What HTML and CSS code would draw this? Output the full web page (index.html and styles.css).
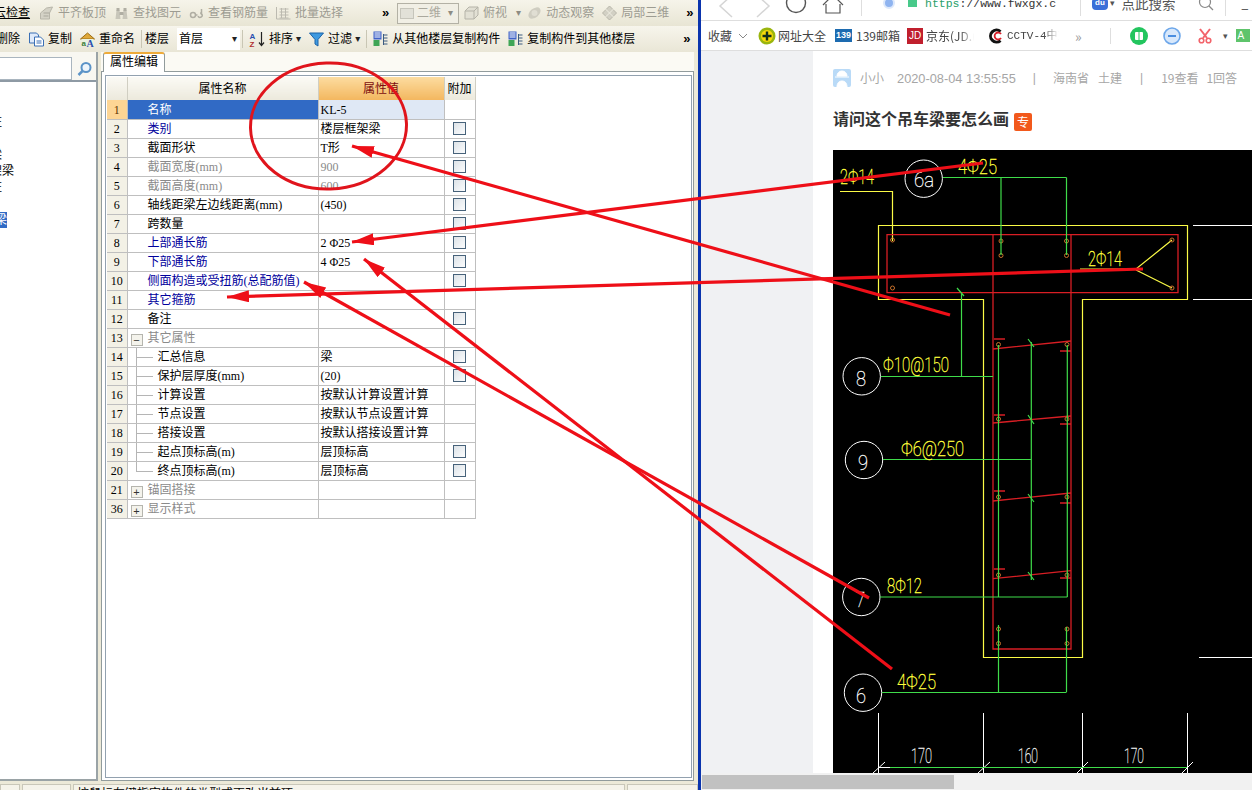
FILE: index.html
```html
<!DOCTYPE html>
<html lang="zh-CN">
<head>
<meta charset="utf-8">
<title>属性编辑</title>
<link rel="stylesheet" href="styles.css">
</head>
<body>
<div class="app">
  <div class="toolbar tb1">
    <span class="tool t-clip"><span class="ul">云检查</span></span>
    <span class="tool off"><svg class="ico" viewBox="0 0 16 16"><path d="M2 14V8l6-5 6-1-3 6v6z" fill="#d4d2c6" stroke="#b8b6aa"/><path d="M5 11h5M5 8h6" stroke="#a9a79c"/></svg>平齐板顶</span>
    <span class="tool off"><svg class="ico" viewBox="0 0 16 16"><path d="M2 14l1-9h3l1 9zM9 14l1-9h3l1 9z" fill="#c8c6ba"/><path d="M3 3h3v3H3zM10 3h3v3h-3zM6 7h4v3H6z" fill="#b0aea3"/></svg>查找图元</span>
    <span class="tool off"><svg class="ico" viewBox="0 0 16 16"><circle cx="4.500" cy="10" r="2.500" fill="none" stroke="#b0aea3" stroke-width="1.500"/><path d="M7 10h2M9.500 11a2.200 2.200 0 1 0 2-3M13 10V4" fill="none" stroke="#b0aea3" stroke-width="1.500"/></svg>查看钢筋量</span>
    <span class="tool off"><svg class="ico" viewBox="0 0 16 16"><path d="M1 2v12h14M4 4h9M4 7h9M4 10h9M4 13h9M6 3v10M10 3v10" fill="none" stroke="#bcbab0"/></svg>批量选择</span>
    <span class="more m-a">»</span>
    <span class="combo-off"><span class="swatch"></span><span class="combo-txt">二维</span><span class="caret-off">▾</span></span>
    <span class="tool off m-s"><svg class="ico" viewBox="0 0 17 16"><path d="M2 6l4-4h9v8l-4 4H2z" fill="#e2e0d4" stroke="#b5b3a8"/><path d="M2 6h9v8M11 6l4-4" fill="none" stroke="#b5b3a8"/></svg>俯视<span class="caret-off m-c">▾</span></span>
    <span class="tool off"><svg class="ico" viewBox="0 0 16 16"><ellipse cx="8" cy="8" rx="7" ry="4.500" fill="#cfcdc1" transform="rotate(-40 8 8)"/><circle cx="8" cy="8" r="3" fill="#e0ded3"/></svg>动态观察</span>
    <span class="tool off"><svg class="ico" viewBox="0 0 16 16"><path d="M8 1l7 7-7 7-7-7z" fill="#d2d0c4" stroke="#b8b6aa"/><path d="M4 4l8 8M12 4l-8 8" stroke="#f1efe4"/></svg>局部三维</span>
    <span class="more m-end">»</span>
  </div>
  <div class="toolbar tb2">
    <span class="tool t-del">删除</span>
    <span class="tool"><svg class="ico" viewBox="0 0 16 16"><path d="M1 2h7l2 2v8H1z" fill="#dfeafa" stroke="#3a6fb5"/><path d="M6 6h6l3 3v6H6z" fill="#fff" stroke="#3a6fb5"/><path d="M8 10h5M8 12h5" stroke="#3a6fb5"/></svg>复制</span>
    <span class="tool"><svg class="ico" viewBox="0 0 16 16"><path d="M1 8l7-6 7 6z" fill="#e0a93a" stroke="#9b6d14"/><rect x="2" y="8" width="12" height="7" fill="#eaf2e0"/><text class="ico-t" x="2" y="15">a</text><text class="ico-a" x="7" y="15.500">A</text></svg>重命名</span>
    <span class="sep"></span>
    <span class="plain">楼层</span>
    <span class="combo"><span>首层</span><span class="caret">▾</span></span>
    <span class="sep"></span>
    <span class="tool m-t"><svg class="ico" viewBox="0 0 16 16"><text class="az-a" x="0" y="7.500">A</text><text class="az-z" x="0" y="15.500">Z</text><path d="M12 1v13M9.500 11.500l2.500 3 2.500-3" fill="none" stroke="#222" stroke-width="1.200"/></svg>排序<span class="caret">▾</span></span>
    <span class="tool"><svg class="ico" viewBox="0 0 16 16"><path d="M1 2h14l-5.500 6.500V15l-3-2V8.500z" fill="#3f9ae0" stroke="#1b62a8"/></svg>过滤<span class="caret">▾</span></span>
    <span class="sep"></span>
    <span class="tool m-t2"><svg class="ico" viewBox="0 0 16 16"><rect x="1" y="0.500" width="8" height="8" fill="#3f62c8"/><path d="M2 2h6M2 4h6M2 6h6" stroke="#fff"/><rect x="1" y="9" width="6" height="6" fill="#3fa556"/><path d="M11 4h4M11 7h4M11 10h4M11 13h4M11 3v11" stroke="#3a5a80"/></svg>从其他楼层复制构件</span>
    <span class="tool"><svg class="ico" viewBox="0 0 16 16"><rect x="1" y="0.500" width="8" height="8" fill="#3f62c8"/><path d="M2 2h6M2 4h6M2 6h6" stroke="#fff"/><rect x="1" y="9" width="6" height="6" fill="#3fa556"/><path d="M11 4h4M11 7h4M11 10h4M11 13h4M11 3v11" stroke="#3a5a80"/></svg>复制构件到其他楼层</span>
    <span class="more m-end2">»</span>
  </div>
  <div class="main">
    <aside class="left">
      <div class="search"><span class="search-box"></span><span class="search-btn"><svg class="ico" viewBox="0 0 16 16"><circle cx="9.500" cy="6.500" r="4.500" fill="#eef5fb" stroke="#5b93c7" stroke-width="2"/><path d="M6 10l-4 4" stroke="#5b93c7" stroke-width="2.500"/></svg></span></div>
      <div class="tree">
        <div class="leaf lw2"><span>框架柱</span></div>
        <div class="leaf lw2"></div>
        <div class="leaf lw2"><span>框架梁</span></div>
        <div class="leaf lw14"><span>框架梁</span></div>
        <div class="leaf lw2"><span>框架柱</span></div>
        <div class="leaf lw2"></div>
        <div class="leaf lw7 sel"><span>框架梁</span></div>
      </div>
    </aside>
    <section class="right">
      <div class="tabs"><span class="tab">属性编辑</span></div>
      <div class="panel">
        <div class="gridbox">
          <table class="grid">
            <colgroup><col class="c-n"><col class="c-k"><col class="c-v"><col class="c-x"></colgroup>
            <thead><tr><th class="rn"></th><th>属性名称</th><th class="hv">属性值</th><th>附加</th></tr></thead>
            <tbody>
              <tr class="cur"><td class="rn">1</td><td class="k sel-k">名称</td><td class="v sel-v">KL-5</td><td></td></tr>
              <tr><td class="rn">2</td><td class="k blue">类别</td><td class="v">楼层框架梁</td><td class="x"><i class="cb"></i></td></tr>
              <tr><td class="rn">3</td><td class="k">截面形状</td><td class="v">T形</td><td class="x"><i class="cb"></i></td></tr>
              <tr><td class="rn">4</td><td class="k grey">截面宽度(mm)</td><td class="v grey">900</td><td class="x"><i class="cb"></i></td></tr>
              <tr><td class="rn">5</td><td class="k grey">截面高度(mm)</td><td class="v grey">600</td><td class="x"><i class="cb"></i></td></tr>
              <tr><td class="rn">6</td><td class="k">轴线距梁左边线距离(mm)</td><td class="v">(450)</td><td class="x"><i class="cb"></i></td></tr>
              <tr><td class="rn">7</td><td class="k">跨数量</td><td class="v"></td><td class="x"><i class="cb"></i></td></tr>
              <tr><td class="rn">8</td><td class="k blue">上部通长筋</td><td class="v">2 Φ25</td><td class="x"><i class="cb"></i></td></tr>
              <tr><td class="rn">9</td><td class="k blue">下部通长筋</td><td class="v">4 Φ25</td><td class="x"><i class="cb"></i></td></tr>
              <tr><td class="rn">10</td><td class="k blue">侧面构造或受扭筋(总配筋值)</td><td class="v"></td><td class="x"><i class="cb"></i></td></tr>
              <tr><td class="rn">11</td><td class="k blue">其它箍筋</td><td class="v"></td><td></td></tr>
              <tr><td class="rn">12</td><td class="k">备注</td><td class="v"></td><td class="x"><i class="cb"></i></td></tr>
              <tr><td class="rn">13</td><td class="k grey g"><i class="exp">−</i>其它属性</td><td class="v"></td><td></td></tr>
              <tr><td class="rn">14</td><td class="k ch">汇总信息</td><td class="v">梁</td><td class="x"><i class="cb"></i></td></tr>
              <tr><td class="rn">15</td><td class="k ch">保护层厚度(mm)</td><td class="v">(20)</td><td class="x"><i class="cb"></i></td></tr>
              <tr><td class="rn">16</td><td class="k ch">计算设置</td><td class="v">按默认计算设置计算</td><td></td></tr>
              <tr><td class="rn">17</td><td class="k ch">节点设置</td><td class="v">按默认节点设置计算</td><td></td></tr>
              <tr><td class="rn">18</td><td class="k ch">搭接设置</td><td class="v">按默认搭接设置计算</td><td></td></tr>
              <tr><td class="rn">19</td><td class="k ch">起点顶标高(m)</td><td class="v">层顶标高</td><td class="x"><i class="cb"></i></td></tr>
              <tr><td class="rn">20</td><td class="k ch last">终点顶标高(m)</td><td class="v">层顶标高</td><td class="x"><i class="cb"></i></td></tr>
              <tr><td class="rn">21</td><td class="k grey g"><i class="exp">+</i>锚固搭接</td><td class="v"></td><td></td></tr>
              <tr><td class="rn">36</td><td class="k grey g"><i class="exp">+</i>显示样式</td><td class="v"></td><td></td></tr>
            </tbody>
          </table>
        </div>
      </div>
    </section>
  </div>
  <div class="status"><span class="s1"></span><span class="s2"></span><span class="s3">按鼠标左键指定构件的类型或更改当前项</span><span class="s4"></span></div>
</div>
<div class="divider"></div>
<div class="browser">
  <div class="addr">
    <div class="addr-in">
      <svg class="nav" viewBox="0 0 150 34"><path d="M31 9L19 20l12 11M56 9l12 11-12 11" fill="none" stroke="#d5d5d5" stroke-width="1.500"/><circle cx="95" cy="17" r="9.500" fill="none" stroke="#555" stroke-width="1.400"/><path d="M122 19l10-10 10 10M125 18v9h14v-9" fill="none" stroke="#555" stroke-width="1.200"/></svg>
      <span class="vr v1"></span>
      <span class="dot"></span>
      <span class="lock"></span>
      <span class="url"><span class="https">https</span>://www.fwxgx.c</span>
      <span class="vr v2"></span>
      <span class="du">du</span><span class="ddn">▾</span>
      <span class="hint">点此搜索</span>
      <svg class="mag" viewBox="0 0 16 16"><circle cx="7" cy="7" r="5.500" fill="none" stroke="#888" stroke-width="1.200"/><path d="M11 11l4 4" stroke="#888" stroke-width="1.200"/></svg>
      <span class="vr v3"></span>
      <span class="min">_</span>
    </div>
  </div>
  <div class="marks">
    <span class="mk m0">收藏</span>
    <svg class="chev" viewBox="0 0 10 10"><path d="M1 3l4 4 4-4" fill="none" stroke="#888"/></svg>
    <svg class="mi m1" viewBox="0 0 18 18"><circle cx="9" cy="9" r="8.500" fill="#9ab50e"/><circle cx="9" cy="9" r="6" fill="#f5d90a"/><path d="M9 4.500v9M4.500 9h9" stroke="#14301a" stroke-width="2.400"/></svg>
    <span class="mk m2">网址大全</span>
    <span class="b139">139</span>
    <span class="mk m3">139邮箱</span>
    <span class="jd">JD</span>
    <span class="mk m4 fade">京东(JD.(</span>
    <svg class="mi m5" viewBox="0 0 16 16"><path d="M12.500 3.500a6 6 0 1 0 0 9" fill="none" stroke="#111" stroke-width="3"/><path d="M13 6a3.500 3.500 0 1 0 0 4" fill="none" stroke="#d8202a" stroke-width="1.800"/></svg>
    <span class="mk m6 fade">CCTV-4中文</span>
    <span class="more2">»</span>
    <span class="vr2"></span>
    <svg class="mi m7" viewBox="0 0 18 18"><circle cx="9" cy="9" r="9" fill="#22c55e"/><rect x="5" y="5" width="8" height="8" rx="1" fill="#fff"/><path d="M9 5v8" stroke="#22c55e"/></svg>
    <svg class="mi m8" viewBox="0 0 18 18"><circle cx="9" cy="9" r="8" fill="#d8e8fb" stroke="#6da7ea" stroke-width="1.600"/><path d="M5 9h8" stroke="#4a8de0" stroke-width="2"/></svg>
    <svg class="mi m9" viewBox="0 0 16 16"><path d="M3 1l7 9M13 1L6 10" stroke="#f2636a" stroke-width="2"/><circle cx="4.500" cy="12.500" r="2.300" fill="none" stroke="#f2636a" stroke-width="1.600"/><circle cx="11.500" cy="12.500" r="2.300" fill="none" stroke="#f2636a" stroke-width="1.600"/></svg>
    <span class="ddn d2">▾</span>
    <span class="greenbox">A</span>
  </div>
  <div class="page">
    <div class="gutter"></div>
    <div class="article">
      <div class="meta">
        <svg class="avatar" viewBox="0 0 18 18"><rect width="18" height="18" rx="2" fill="#b9daf7"/><path d="M4 7a5 5 0 0 1 10 0zM2 8h14M4 18c0-4 2-6 5-6s5 2 5 6" fill="#fff" stroke="#fff"/></svg>
        <span class="author">小小</span>
        <span class="date">2020-08-04 13:55:55</span>
        <span class="bar b-a">|</span>
        <span class="mt-a">海南省</span>
        <span class="mt-b">土建</span>
        <span class="bar b-b">|</span>
        <span class="mt-c">19查看</span>
        <span class="mt-d">1回答</span>
      </div>
      <div class="title"><h1>请问这个吊车梁要怎么画</h1><span class="badge">专</span></div>
      <div class="drawing">
        <svg class="cad" viewBox="833 150 419 623" preserveAspectRatio="none">
          <g class="c-yel">
            <path d="M878.500 225.500H1187.500V299.500H1082.500V657.500H983.500V299.500H878.500Z"/>
            <path d="M892.500 241V191.500H840M1080 269H1136L1172 240M1136 270L1172 288"/>
          </g>
          <g class="c-wht">
            <circle cx="923.700" cy="178.700" r="18.700"/><circle cx="861.700" cy="376.300" r="18.700"/><circle cx="864" cy="460" r="18.700"/><circle cx="861.300" cy="597" r="18.700"/><circle cx="863" cy="692.700" r="18.700"/>
            <path d="M1193 225.500H1252M1193 299.500H1252M1199 657.500H1252M878.500 713V773M983.500 713V773M1082.500 713V773M1187.500 713V773M878 767.500H890M983 767.500H996M873 773L885 762M978 773L990 762M1077 773L1088 762M1182 773L1193 762"/>
          </g>
          <g class="c-red">
            <path d="M887 234.700H1178V292.700H887ZM993 234.700V649H1071V234.700"/>
            <path d="M993 349L1071 341M993 423L1071 416M993 501L1071 493M993 578.700L1071 570.700M994 339H1005M1060 351H1071M994 415H1005M1060 424H1071M994 491H1005M1060 503H1071M994 569H1005M1060 578H1071"/>
          </g>
          <g class="c-dot">
            <circle cx="892.500" cy="240" r="2"/><circle cx="892.500" cy="288" r="2"/><circle cx="1001" cy="241" r="2"/><circle cx="1001" cy="255.500" r="2"/><circle cx="1066.500" cy="241" r="2"/><circle cx="1066.500" cy="255.500" r="2"/><circle cx="1172" cy="240" r="2"/><circle cx="1172" cy="288" r="2"/>
            <circle cx="998.500" cy="344.500" r="2"/><circle cx="1067" cy="344.500" r="2"/><circle cx="998.500" cy="419" r="2"/><circle cx="1067" cy="419" r="2"/><circle cx="998.500" cy="497" r="2"/><circle cx="1067" cy="497" r="2"/><circle cx="998.500" cy="575" r="2"/><circle cx="1067" cy="575" r="2"/><circle cx="998.500" cy="629" r="2"/><circle cx="1067" cy="629" r="2"/><circle cx="998.500" cy="643.500" r="2"/><circle cx="1067" cy="643.500" r="2"/>
          </g>
          <g class="c-grn">
            <path d="M943 177.500H1066.500M1001 177.500V255M1066.500 177.500V255M881 376.500H993M961.500 376.500V293M957 288L964 296M883 459.500H1031M1031.300 342V580M998.500 345V597M1067.300 345V597M880 597H1067.300M998.500 625V692M1066.500 627V692M882 692.500H1066.500M890 767.500H1187"/>
            <path d="M1028 339L1034 347M1028 415L1034 424M1028 494L1034 502M1028 572L1034 580"/>
          </g>
          <g class="t-wht">
            <text x="914" y="187" textLength="20" lengthAdjust="spacingAndGlyphs">6a</text>
            <text x="856" y="386" textLength="10" lengthAdjust="spacingAndGlyphs">8</text>
            <text x="858" y="470" textLength="10" lengthAdjust="spacingAndGlyphs">9</text>
            <text x="856" y="607" textLength="9" lengthAdjust="spacingAndGlyphs">7</text>
            <text x="856" y="703" textLength="10" lengthAdjust="spacingAndGlyphs">6</text>
            <text x="911" y="763" textLength="21" lengthAdjust="spacingAndGlyphs">170</text>
            <text x="1018" y="763" textLength="20" lengthAdjust="spacingAndGlyphs">160</text>
            <text x="1124" y="763" textLength="20" lengthAdjust="spacingAndGlyphs">170</text>
          </g>
          <g class="t-yel">
            <text x="958" y="174" textLength="39" lengthAdjust="spacingAndGlyphs">4Φ25</text>
            <text x="840" y="184" textLength="34" lengthAdjust="spacingAndGlyphs">2Φ14</text>
            <text x="1088" y="266" textLength="34" lengthAdjust="spacingAndGlyphs">2Φ14</text>
            <text x="883" y="372" textLength="66" lengthAdjust="spacingAndGlyphs">Φ10@150</text>
            <text x="901" y="456" textLength="63" lengthAdjust="spacingAndGlyphs">Φ6@250</text>
            <text x="887" y="593" textLength="35" lengthAdjust="spacingAndGlyphs">8Φ12</text>
            <text x="897" y="689" textLength="39" lengthAdjust="spacingAndGlyphs">4Φ25</text>
          </g>
        </svg>
      </div>
    </div>
  </div>
  <div class="hscroll"><span class="thumb"></span></div>
</div>
<svg class="marks-over" viewBox="0 0 1252 790">
  <defs>
    <marker id="tip" markerUnits="userSpaceOnUse" markerWidth="24" markerHeight="14" refX="22" refY="6" orient="auto-start-reverse"><path d="M0 0L22 6L0 12Z" fill="#ee0f18"/></marker>
  </defs>
  <ellipse class="ring" cx="328.500" cy="126" rx="78" ry="63" transform="rotate(-2 328.500 126)"/>
  <path class="arrow" d="M950 315L352 146" marker-end="url(#tip)"/>
  <path class="arrow" d="M983 163L352 242" marker-end="url(#tip)"/>
  <path class="arrow" d="M1143 269L227 297" marker-end="url(#tip)"/>
  <path class="arrow" d="M892 669L364 259" marker-end="url(#tip)"/>
  <path class="arrow" d="M869 598L304 282" marker-end="url(#tip)"/>
</svg>
</body>
</html>
```
FILE: styles.css
```css
* { box-sizing: border-box; }
html, body { margin: 0; padding: 0; }
body {
  position: relative;
  display: flex;
  width: 1252px;
  height: 790px;
  overflow: hidden;
  background: #fff;
  color: #000;
  font: 12px/14px "Liberation Serif", "Noto Sans CJK SC", serif;
}
.app { display: flex; flex-direction: column; flex: 0 0 698px; width: 698px; height: 790px; background: #ece9d8; overflow: hidden; }

.toolbar { display: flex; align-items: center; flex: 0 0 26px; height: 26px; white-space: nowrap; }
.tb1 { background: linear-gradient(#f6f4ea, #e8e5d4); padding-left: 0; }
.tb2 { background: linear-gradient(#f7f5ec, #e9e6d6); }
.tool { display: inline-flex; align-items: center; gap: 3px; margin-right: 7px; flex: none; }
.ico { display: block; width: 17px; height: 16px; flex: none; }
.off { color: #9d9c92; }
.t-clip { margin-left: -6px; margin-right: 8px; }
.ul { text-decoration: underline; }
.more { flex: none; font: bold 13px/14px "Liberation Sans", sans-serif; width: 10px; }
.m-a { margin-left: 32px; margin-right: 5px; }
.m-end { margin-left: 10px; }
.m-end2 { margin-left: 41px; }
.combo-off { display: inline-flex; align-items: center; gap: 3px; flex: none; width: 62px; height: 21px; border: 1px solid #b3b1a5; padding: 0 2px; color: #aaa89d; margin-right: 4px; background: #f1efe5; }
.swatch { width: 14px; height: 11px; border: 1px solid #c6c5bb; background: #e2e1d8; }
.caret-off { margin-left: 4px; font-size: 10px; color: #8d8c83; font-family: "DejaVu Sans", sans-serif; }
.m-s { margin-right: 5px; }
.m-c { margin-left: 6px; }
.t-del { margin-left: -4px; margin-right: 8px; }
.sep { flex: none; width: 1px; height: 18px; background: #c9c6b4; margin: 0 3px 0 -1px; }
.plain { flex: none; margin-right: 8px; }
.combo { display: inline-flex; justify-content: space-between; align-items: center; flex: none; width: 63px; height: 22px; background: #fff; padding: 0 3px 0 2px; margin-right: 3px; }
.caret { font-size: 10px; font-family: "DejaVu Sans", sans-serif; color: #222; }
.m-t { margin-left: 3px; }
.m-t2 { margin-left: 2px; }
.ico-t { font: bold 8px "Liberation Sans", sans-serif; fill: #3a7d3a; }
.ico-a { font: bold 10px "Liberation Serif", serif; fill: #2a4fb0; }
.az-a { font: bold 8px "Liberation Sans", sans-serif; fill: #2a4fb0; }
.az-z { font: bold 8px "Liberation Sans", sans-serif; fill: #b03030; }

.main { display: flex; flex: 1 1 auto; min-height: 0; }
.left { flex: 0 0 98px; width: 98px; height: 729px; background: #fff; border-right: 2px solid #9aa3a6; border-bottom: 2px solid #9aa3a6; display: flex; flex-direction: column; }
.search { display: flex; flex: 0 0 30px; height: 30px; background: #f8f7f1; padding-top: 5px; border-bottom: 2px solid #8e9aa4; }
.search-box { width: 72px; height: 23px; background: #fff; border: 1px solid #a9b5bf; border-left: 0; }
.search-btn { display: flex; align-items: center; justify-content: center; width: 24px; height: 23px; }
.tree { padding-top: 32px; display: flex; flex-direction: column; }
.leaf { display: flex; justify-content: flex-end; height: 16.330px; overflow: hidden; font-size: 12px; line-height: 16px; white-space: nowrap; }
.leaf span { flex: none; }
.lw2 { width: 2px; }
.lw14 { width: 14px; }
.lw7 { width: 7px; height: 16px; }
.sel { background: #316ac5; color: #fff; }

.right { display: flex; flex-direction: column; flex: 0 0 593px; width: 593px; margin-left: 3px; height: 729px; }
.tabs { flex: 0 0 19px; height: 19px; padding-left: 2px; background: #fbfaf4; }
.tab { display: block; width: 62px; height: 20px; background: #fff; border: 1px solid #919b9c; border-top: 2px solid #eeab3a; border-bottom: 0; border-radius: 3px 3px 0 0; text-align: center; line-height: 17px; position: relative; z-index: 1; }
.panel { flex: 1 1 auto; background: #fff; border: 1px solid #919b9c; padding: 3px 1px 2px 3px; display: flex; }
.gridbox { flex: 1 1 auto; border: 1px solid #92a1af; padding: 1px; background: #fff; }

.grid { table-layout: fixed; border-collapse: collapse; width: 368px; }
.c-n { width: 20px; } .c-k { width: 191px; } .c-v { width: 126px; } .c-x { width: 31px; }
.grid th { height: 23px; padding: 0; font-weight: normal; text-align: center; background: linear-gradient(#fbfaf5, #ece9dc); border-right: 1px solid #d0cec2; }
.grid th.hv { background: linear-gradient(#fcdca0, #f3b75f); color: #7c0d0d; }
.grid td { height: 19px; padding: 1px 0 0; border: 1px solid #bfbfbf; border-top: 0; border-left: 0; white-space: nowrap; overflow: visible; }
.grid tbody tr:first-child td { border-top: 0; }
.rn { text-align: center; background: #f2f0e4; }
.grid td.rn { background: #f3f1e6; }
.grid tr.cur td.rn { background: #fdd594; color: #5a2f00; }
.k { padding-left: 20px !important; }
.v { padding-left: 2px !important; }
.sel-k { background: #316ac5; color: #fff; }
.sel-v { background: #dfe8f5; }
.blue { color: #00009c; }
.grey { color: #8a8a8a; }
.x { text-align: center; }
.grid td.x { padding-top: 0; }
.cb { display: block; width: 13px; height: 13px; margin: 0 auto; position: relative; left: 0; border: 1px solid #47627a; background: linear-gradient(135deg, #dde3e8, #fbfcfd); }
.g { padding-left: 3px !important; }
.exp { display: inline-block; width: 12px; height: 12px; margin-right: 5px; border: 1px solid #b5b5ae; background: #f4f3ec; color: #333; font: 11px/10px "Liberation Sans", sans-serif; text-align: center; vertical-align: -2px; }
.ch { padding-left: 30px !important; position: relative; }
.ch::before { content: ""; position: absolute; left: 8px; top: 0; bottom: 0; width: 1px; background: #b5b5b5; }
.ch::after { content: ""; position: absolute; left: 8px; top: 9px; width: 17px; height: 1px; background: #b5b5b5; }
.ch.last::before { bottom: 9px; }

.status { display: flex; flex: 0 0 6px; height: 6px; overflow: hidden; gap: 2px; background: #ece9d8; }
.status span { display: block; height: 12px; background: #f5f3ea; border: 1px solid #c9c7b9; padding: 2px 0 0 3px; white-space: nowrap; }
.s1 { width: 20px; } .s2 { width: 49px; } .s3 { width: 552px; } .s4 { flex: 1; }

.divider { flex: 0 0 3px; width: 3px; background: #0a34ad; }

.browser { flex: 0 0 551px; width: 551px; height: 790px; display: flex; flex-direction: column; font-family: "Noto Sans CJK SC", sans-serif; overflow: hidden; }
.addr { flex: 0 0 21px; height: 21px; overflow: hidden; border-bottom: 1px solid #dedede; }
.addr-in { display: flex; align-items: center; height: 34px; margin-top: -14px; white-space: nowrap; color: #666; }
.nav { display: block; flex: none; width: 150px; height: 34px; margin-left: 0; }
.vr { flex: none; width: 1px; height: 26px; background: #dedede; }
.v1 { margin-left: 10px; }
.dot { flex: none; width: 12px; height: 12px; border-radius: 50%; background: #8fb4f0; border: 2px solid #dce8fb; margin-left: 21px; }
.lock { flex: none; width: 9px; height: 8px; background: #48c98a; margin-left: 13px; }
.url { flex: none; width: 139px; margin-left: 8px; font: 11.500px "Liberation Mono", monospace; color: #333; letter-spacing: 0; overflow: hidden; }
.https { color: #2aa06b; }
.v2 { margin-left: 16px; }
.du { flex: none; width: 16px; height: 14px; margin-left: 11px; border-radius: 6px 6px 4px 4px; background: #3a6fd8; color: #fff; font: bold 8px/14px "Liberation Sans", sans-serif; text-align: center; }
.ddn { flex: none; font-size: 9px; color: #555; margin-left: 2px; font-family: "DejaVu Sans", sans-serif; }
.hint { flex: none; margin-left: 7px; font-size: 13.500px; color: #555; }
.mag { flex: none; width: 16px; height: 16px; margin-left: 22px; }
.v3 { margin-left: 11px; }
.min { margin-left: 16px; color: #333; }

.marks { display: flex; align-items: center; flex: 0 0 30px; height: 30px; border-bottom: 1px solid #dedede; padding-left: 7px; white-space: nowrap; color: #444; }
.mk { flex: none; }
.mi { display: block; flex: none; }
.chev { width: 10px; height: 10px; margin-left: 6px; flex: none; }
.m1 { width: 18px; height: 18px; margin-left: 10px; }
.m2 { margin-left: 2px; }
.b139 { flex: none; width: 17px; height: 13px; margin-left: 9px; background: #1d6bb0; color: #fff; font: bold 9px/13px "Liberation Sans", sans-serif; text-align: center; }
.m3 { margin-left: 4px; }
.jd { flex: none; width: 16px; height: 16px; margin-left: 7px; background: #c01f2d; color: #fff; font: 10px/16px "Liberation Sans", sans-serif; text-align: center; }
.m4 { margin-left: 3px; width: 48px; overflow: hidden; }
.m5 { width: 16px; height: 16px; margin-left: 14px; }
.m6 { margin-left: 3px; width: 52px; overflow: hidden; font-family: "Liberation Mono", "Noto Sans CJK SC", monospace; font-size: 11px; }
.fade { -webkit-mask-image: linear-gradient(90deg, #000 70%, transparent); mask-image: linear-gradient(90deg, #000 70%, transparent); }
.more2 { flex: none; margin-left: 16px; color: #999; font-size: 14px; width: 10px; }
.vr2 { flex: none; width: 1px; height: 16px; background: #dedede; margin-left: 25px; }
.m7 { width: 18px; height: 18px; margin-left: 19px; }
.m8 { width: 18px; height: 18px; margin-left: 15px; }
.m9 { width: 16px; height: 16px; margin-left: 16px; }
.d2 { margin-left: 10px; }
.greenbox { flex: none; width: 14px; height: 13px; margin-left: 8px; background: #5ec46b; color: #fff; font: 10px/13px "Liberation Sans", sans-serif; padding-left: 2px; }

.page { display: flex; flex: 1 1 auto; min-height: 0; }
.gutter { flex: 0 0 112px; background: #f0f1f3; }
.article { flex: 1 1 auto; min-width: 0; padding-left: 20px; background: #fff; display: flex; flex-direction: column; }
.meta { display: flex; align-items: center; flex: 0 0 54px; height: 54px; padding-top: 0; color: #a6a6a6; font-size: 12px; white-space: nowrap; }
.avatar { display: block; width: 18px; height: 18px; flex: none; }
.author { margin-left: 9px; }
.date { margin-left: 13px; font: 12.800px "Liberation Sans", sans-serif; }
.bar { font: 12px "Liberation Sans", sans-serif; }
.b-a { margin-left: 17px; }
.mt-a { margin-left: 17px; }
.mt-b { margin-left: 9px; }
.b-b { margin-left: 18px; }
.mt-c { margin-left: 18px; }
.mt-d { margin-left: 8px; }
.title { display: flex; align-items: center; flex: 0 0 45px; height: 45px; padding-bottom: 20px; }
.title h1 { margin: 0; font-size: 16px; line-height: 22px; font-weight: bold; color: #333; }
.badge { width: 18px; height: 18px; margin: 9px 0 0 5px; border-radius: 2px; background: #f2591c; color: #fff; font-size: 12px; line-height: 18px; text-align: center; }
.drawing { flex: 1 1 auto; min-height: 0; background: #000; }
.cad { display: block; width: 100%; height: 100%; }
.cad g { fill: none; }
.c-yel { stroke: #fbfb46; stroke-width: 1.200; }
.c-wht { stroke: #fff; stroke-width: 1; }
.c-red { stroke: #d81e24; stroke-width: 1.300; }
.c-dot { stroke: #c8702a; stroke-width: 1; }
.c-grn { stroke: #3fdc4a; stroke-width: 1.200; }
.t-wht text, .t-yel text { font: 100 21px Roboto, "Liberation Sans", sans-serif; }
.cad .t-wht { fill: #fff; stroke: #fff; stroke-width: 0.300; }
.cad .t-yel { fill: #ffff3c; stroke: #ffff3c; stroke-width: 0.400; }

.hscroll { flex: 0 0 17px; height: 17px; background: #f1f1f1; padding: 2px 0 1px; }
.thumb { display: block; width: 252px; height: 14px; background: #c1c1c1; margin-left: 1px; }

.marks-over { position: absolute; left: 0; top: 0; width: 1252px; height: 790px; pointer-events: none; }
.ring { fill: none; stroke: #e0141c; stroke-width: 3; }
.arrow { fill: none; stroke: #ee0f18; stroke-width: 3.200; }
```
